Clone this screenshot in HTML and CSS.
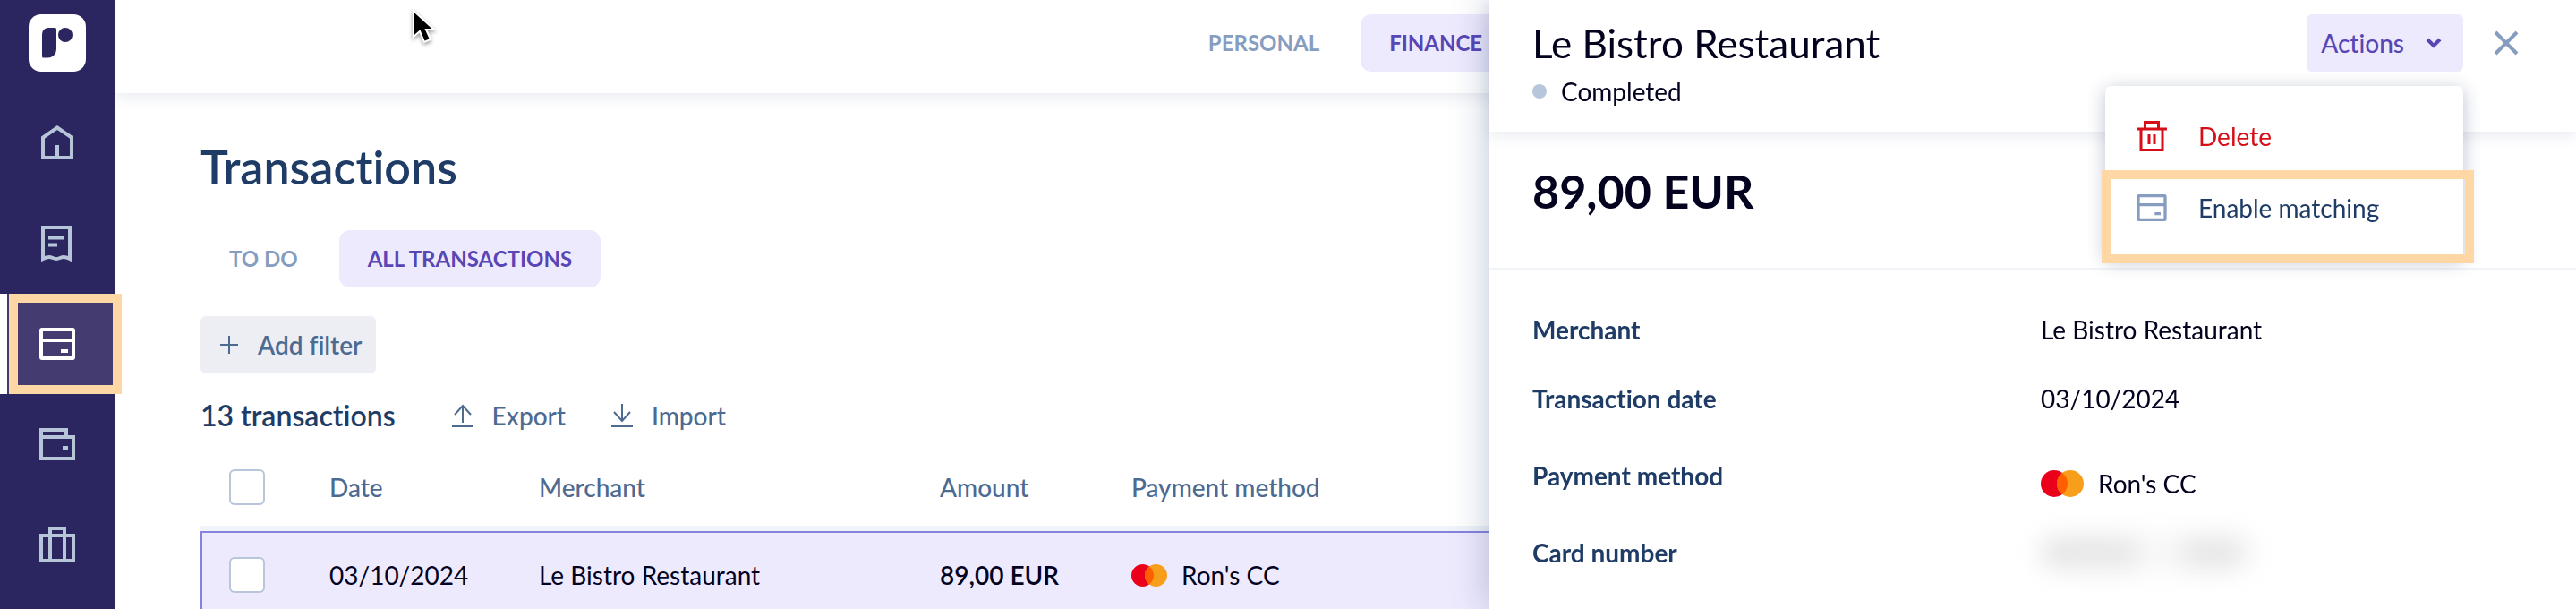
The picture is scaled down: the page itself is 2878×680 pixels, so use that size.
FILE: index.html
```html
<!DOCTYPE html>
<html lang="en">
<head>
    <meta charset="UTF-8">
    <meta name="viewport" content="width=device-width, initial-scale=1.0">
    <title>Transactions</title>
    <link rel="stylesheet" href="styles.css">
</head>
<body>

    <!-- Shared icons -->
    <svg class="sprite" aria-hidden="true">
        <symbol id="icon-card" viewBox="0 0 48 48">
            <rect x="6" y="8" width="36" height="32" rx="1" fill="none" stroke="currentColor" stroke-width="4"/>
            <path d="M6 20h36M28 32h8" fill="none" stroke="currentColor" stroke-width="4"/>
        </symbol>
        <symbol id="icon-mastercard" viewBox="0 0 48 30">
            <circle cx="15" cy="15" r="15" fill="#eb001b"/>
            <circle cx="33" cy="15" r="15" fill="#f79e1b"/>
            <path d="M24 3a15 15 0 0 1 0 24a15 15 0 0 1 0-24z" fill="#ff5f00"/>
        </symbol>
    </svg>

    <div class="app">
        <aside class="sidebar">
            <a href="#" class="logo" aria-label="Dashboard">
                <svg width="64" height="64" viewBox="0 0 64 64">
                    <rect width="64" height="64" rx="14" fill="#fff"/>
                    <path d="M22 15h7.500q1.500 0 1.500 1.500V39a9.500 9.500 0 0 1-9.500 9.500h-5q-1.500 0-1.500-1.500V22a7 7 0 0 1 7-7z" fill="#2b265f"/>
                    <circle cx="41" cy="23" r="8" fill="#2b265f"/>
                </svg>
            </a>
            <nav class="side-nav">
                <a href="#" aria-label="Home">
                    <svg viewBox="0 0 48 48"><path d="M8 40V17.500L24 6.500l16 11V40zM24 26v14"/></svg>
                </a>
                <a href="#" aria-label="Expenses">
                    <svg viewBox="0 0 48 48"><path d="M8 41V6h30v35c-2-1-4-2-7-2s-5 2-8 2-5-2-8-2-5 1-7 2zM14 17.500h18M14 25.500h10"/></svg>
                </a>
                <a href="#" class="active" aria-label="Transactions">
                    <svg><use href="#icon-card"/></svg>
                </a>
                <a href="#" aria-label="Wallet">
                    <svg viewBox="0 0 48 48"><path d="M6 16V8h28v8M6 16h36v24H6zM30 28h6"/></svg>
                </a>
                <a href="#" aria-label="Travel">
                    <svg viewBox="0 0 48 48"><path d="M6 14h36v28H6zM16 42V6h16v36"/></svg>
                </a>
            </nav>
        </aside>

        <div class="content">
            <header class="topbar">
                <nav class="tabs">
                    <a href="#" class="tab">PERSONAL</a>
                    <a href="#" class="tab tab-active">FINANCE</a>
                </nav>
            </header>

            <main class="main">
                <h1>Transactions</h1>
                <nav class="tabs">
                    <a href="#" class="tab">TO DO</a>
                    <a href="#" class="tab tab-active">ALL TRANSACTIONS</a>
                </nav>
                <button type="button" class="btn-filter">
                    <svg width="20" height="20" viewBox="0 0 20 20"><path d="M10 0v20M0 10h20"/></svg>
                    Add filter
                </button>

                <div class="toolbar">
                    <h2>13 transactions</h2>
                    <button type="button" class="btn-link">
                        <svg width="26" height="28" viewBox="0 0 26 28"><path d="M13 22V3M4 13l9-10 9 10M1 26h24"/></svg>
                        Export
                    </button>
                    <button type="button" class="btn-link">
                        <svg width="26" height="28" viewBox="0 0 26 28"><path d="M13 1v19M4 10l9 10 9-10M1 26h24"/></svg>
                        Import
                    </button>
                </div>

                <table class="transactions">
                    <colgroup>
                        <col class="col-check">
                        <col class="col-date">
                        <col class="col-merchant">
                        <col class="col-amount">
                        <col>
                    </colgroup>
                    <thead>
                        <tr>
                            <th><input type="checkbox" aria-label="Select all"></th>
                            <th>Date</th>
                            <th>Merchant</th>
                            <th>Amount</th>
                            <th>Payment method</th>
                        </tr>
                    </thead>
                    <tbody>
                        <tr>
                            <td><input type="checkbox" aria-label="Select transaction"></td>
                            <td>03/10/2024</td>
                            <td>Le Bistro Restaurant</td>
                            <td class="amount">89,00 EUR</td>
                            <td>
                                <span class="method">
                                    <svg width="40" height="25"><use href="#icon-mastercard"/></svg>
                                    Ron's CC
                                </span>
                            </td>
                        </tr>
                    </tbody>
                </table>
            </main>
        </div>
    </div>

    <section class="panel">
        <header class="panel-header">
            <div class="panel-heading">
                <h2>Le Bistro Restaurant</h2>
                <p class="status">Completed</p>
            </div>
            <div class="actions">
                <button type="button" class="btn-actions">
                    Actions
                    <svg width="18" height="14" viewBox="0 0 18 14"><path d="M2 3l7 7 7-7"/></svg>
                </button>
                <div class="menu">
                    <button type="button" class="menu-item delete">
                        <svg width="40" height="40" viewBox="0 0 40 40"><path d="M3 12h34M12.500 12V4.500h15V12M8 12v23.500h24V12M17 18v11M23 18v11"/></svg>
                        Delete
                    </button>
                    <button type="button" class="menu-item highlighted">
                        <svg width="40" height="40"><use href="#icon-card"/></svg>
                        Enable matching
                    </button>
                </div>
            </div>
            <button type="button" class="btn-close" aria-label="Close">
                <svg width="28" height="28" viewBox="0 0 28 28"><path d="M2 2l24 24M26 2L2 26"/></svg>
            </button>
        </header>
        <div class="total">89,00 EUR</div>
        <dl class="details">
            <dt>Merchant</dt>
            <dd>Le Bistro Restaurant</dd>
            <dt>Transaction date</dt>
            <dd>03/10/2024</dd>
            <dt class="row-method">Payment method</dt>
            <dd class="row-method">
                <span class="method">
                    <svg width="48" height="30"><use href="#icon-mastercard"/></svg>
                    Ron's CC
                </span>
            </dd>
            <dt>Card number</dt>
            <dd><div class="card-hidden"></div></dd>
        </dl>
    </section>

    <svg class="cursor" width="32" height="42" viewBox="0 0 32 42">
        <path d="M3 2v29l7-6 5 12 7-3-5-11h9z" fill="#000" stroke="#fff" stroke-width="2"/>
    </svg>

</body>
</html>
```
FILE: styles.css
```css
* { box-sizing: border-box; }
body { margin: 0; background: #fff; color: #03031f; font-family: Lato, sans-serif; font-size: 28px; line-height: 36px; font-variant-ligatures: none; overflow: hidden; }
h1, h2, p, dl, dd { margin: 0; }
a { text-decoration: none; }
button { font: inherit; font-variant-ligatures: none; border: none; background: none; padding: 0; cursor: pointer; }
svg { flex: none; }
.sprite { position: absolute; width: 0; height: 0; }

.app { display: flex; min-height: 100vh; }

/* Sidebar */
.sidebar { flex: none; width: 128px; background: #2b265f; position: relative; z-index: 2; }
.logo { display: flex; justify-content: center; padding: 16px 0 24px; }
.side-nav a { display: flex; align-items: center; justify-content: center; height: 112px; color: #b7c5d9; position: relative; }
.side-nav svg { width: 48px; height: 48px; fill: none; stroke: currentColor; stroke-width: 4; }
.side-nav .active { color: #fff; background: linear-gradient(to right, #fff 8px, #443b70 8px); }
.side-nav .active::after { content: ""; position: absolute; top: 0; bottom: 0; left: 10px; right: -8px; border: 10px solid #ffd7a5; }

.content { flex: 1; min-width: 0; }
.topbar { display: flex; justify-content: center; align-items: flex-start; height: 104px; padding: 16px; box-shadow: 0 4px 16px rgba(30, 50, 100, 0.1); }
.tabs { display: flex; gap: 14px; }
.tab { padding: 0 32px; border-radius: 12px; color: #869dbf; font-size: 24px; font-weight: 700; line-height: 64px; white-space: nowrap; }
.tab-active { background: #eeeafe; color: #5846b5; }

/* Main column */
.main { padding: 48px 96px 0; }
h1 { margin-bottom: 37px; color: #1f3c66; font-size: 52px; line-height: 68px; font-weight: 600; }
.btn-filter { display: flex; align-items: center; gap: 22px; height: 64px; margin-top: 32px; padding: 0 16px 0 22px; border-radius: 6px; background: #edeef4; color: #4d6a91; font-weight: 600; }
.btn-filter svg, .btn-link svg { fill: none; stroke: currentColor; stroke-width: 2; }
.toolbar { display: flex; align-items: center; gap: 50px; height: 40px; margin-top: 27px; }
.toolbar h2 { margin-right: 12px; color: #1f3c66; font-size: 32px; font-weight: 600; }
.btn-link { display: flex; align-items: center; gap: 20px; color: #4d6a91; font-weight: 500; }

.transactions { width: 100%; margin-top: 17px; border-spacing: 0; table-layout: fixed; text-align: left; }
.col-check { width: 144px; }
.col-date { width: 234px; }
.col-merchant { width: 448px; }
.col-amount { width: 214px; }
.transactions th { height: 92px; padding: 0; border-bottom: 6px solid #f0f3f9; color: #4d6a91; font-weight: 500; }
.transactions td { height: 98px; padding: 0; border-top: 2px solid #8583dd; border-bottom: 2px solid #8583dd; background: #eeeafe; }
.transactions td:first-child { border-left: 2px solid #8583dd; }
.transactions td:last-child { border-right: 2px solid #8583dd; }
.transactions th:first-child { padding-left: 32px; }
.transactions td:first-child { padding-left: 30px; }
.transactions .amount { font-weight: 600; }
input[type="checkbox"] { appearance: none; display: block; width: 40px; height: 40px; margin: 0; border: 2px solid #b7c6da; border-radius: 6px; background: #fff; }
.method { display: flex; align-items: center; gap: 16px; }

/* Detail panel */
.panel { position: fixed; top: 0; right: 0; bottom: 0; z-index: 3; width: 100%; max-width: 1214px; background: #fff; box-shadow: 0 0 40px rgba(30, 60, 110, 0.3); }
.panel-header { display: flex; align-items: flex-start; gap: 16px; height: 147px; padding: 16px 46px 0 48px; box-shadow: 0 4px 16px rgba(30, 50, 100, 0.1); }
.panel-heading { flex: 1; }
.panel-heading h2 { font-size: 44px; line-height: 64px; font-weight: 400; }
.status { display: flex; align-items: center; gap: 16px; line-height: 44px; }
.status::before { content: ""; width: 16px; height: 16px; border-radius: 50%; background: #b7c6da; }
.actions { position: relative; }
.btn-actions { display: flex; align-items: center; gap: 24px; height: 64px; padding: 0 24px 0 16px; border-radius: 6px; background: #eeeafe; color: #5846b5; font-weight: 500; }
.btn-actions svg { fill: none; stroke: currentColor; stroke-width: 4; }
.btn-close { display: flex; align-items: center; justify-content: center; width: 64px; height: 64px; color: #869dbf; }
.btn-close svg { fill: none; stroke: currentColor; stroke-width: 4; }
.menu { position: absolute; top: 80px; right: 0; width: 400px; padding: 16px 0; border-radius: 6px; background: #fff; box-shadow: 0 4px 20px rgba(30, 50, 100, 0.3); }
.menu-item { display: flex; align-items: center; gap: 32px; width: 100%; height: 80px; padding-left: 32px; color: #1f3c66; position: relative; }
.menu-item svg { color: #869dbf; }
.delete, .delete svg { color: #d60e17; }
.delete svg { fill: none; stroke: currentColor; stroke-width: 3; }
.highlighted::after { content: ""; position: absolute; top: -2px; left: -4px; right: -12px; bottom: -22px; border: 10px solid #ffd7a5; }
.total { height: 154px; padding: 32px 48px; border-bottom: 2px solid #f0f4f9; font-size: 52px; line-height: 68px; font-weight: 700; }
.details { display: grid; grid-template-columns: 1fr 1fr; column-gap: 18px; row-gap: 41px; padding: 49px 48px; }
.details dt { color: #1f3c66; font-weight: 700; }
.row-method { min-height: 46px; padding-top: 9px; }
dd.row-method { padding-top: 18px; }
.card-hidden { width: 240px; height: 36px; border-radius: 16px; background: linear-gradient(to right, #ccc 0 40%, #f0f0f0 50% 60%, #ccc 72% 90%, #fff); filter: blur(14px); opacity: 0.5; }

.cursor { position: absolute; top: 10px; left: 459px; z-index: 4; filter: drop-shadow(0 2px 2px rgba(0, 0, 0, 0.4)); }
```
